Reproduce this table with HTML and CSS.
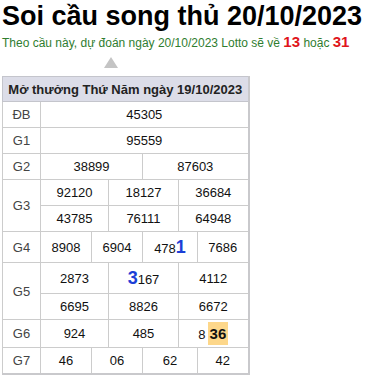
FILE: index.html
```html
<!DOCTYPE html>
<html lang="vi">
<head>
<meta charset="utf-8">
<link rel="stylesheet" href="styles.css">
</head>
<body>
<div class="page">
  <h1 class="title">Soi cầu song thủ 20/10/2023</h1>
  <p class="sub">Theo cầu này, dự đoán ngày 20/10/2023 Lotto sẽ về <b class="hot">13</b> hoặc <b class="hot">31</b></p>
  <div class="arrow-row"><span class="arrow"></span></div>
  <table class="kq">
    <colgroup>
      <col class="c0"><col class="c1"><col class="c2"><col class="c3"><col class="c4"><col class="c5"><col class="c6">
    </colgroup>
    <thead>
      <tr><th colspan="7">Mở thưởng Thứ Năm ngày 19/10/2023</th></tr>
    </thead>
    <tbody>
      <tr><td class="lb">ĐB</td><td colspan="6">45305</td></tr>
      <tr><td class="lb">G1</td><td colspan="6">95559</td></tr>
      <tr><td class="lb">G2</td><td colspan="3">38899</td><td colspan="3">87603</td></tr>
      <tr><td class="lb" rowspan="2">G3</td><td colspan="2">92120</td><td colspan="2">18127</td><td colspan="2">36684</td></tr>
      <tr><td colspan="2">43785</td><td colspan="2">76111</td><td colspan="2">64948</td></tr>
      <tr class="tall"><td class="lb">G4</td><td>8908</td><td colspan="2">6904</td><td colspan="2">478<span class="blue">1</span></td><td>7686</td></tr>
      <tr class="tall"><td class="lb" rowspan="2">G5</td><td colspan="2">2873</td><td colspan="2"><span class="blue">3</span>167</td><td colspan="2">4112</td></tr>
      <tr><td colspan="2">6695</td><td colspan="2">8826</td><td colspan="2">6672</td></tr>
      <tr class="g6"><td class="lb">G6</td><td colspan="2">924</td><td colspan="2">485</td><td colspan="2">8<span class="mark">36</span></td></tr>
      <tr><td class="lb">G7</td><td>46</td><td colspan="2">06</td><td colspan="2">62</td><td>42</td></tr>
    </tbody>
  </table>
</div>
</body>
</html>
```

FILE: styles.css
```css
html, body {
  margin: 0;
  padding: 0;
  background: #fff;
}
.page {
  padding: 0 2px;
  font-family: "Liberation Sans", Arial, sans-serif;
  color: #222;
}
.title {
  margin: 0;
  padding-top: 1px;
  font-size: 27px;
  line-height: 30px;
  font-weight: bold;
  color: #000;
  white-space: nowrap;
}
.sub {
  margin: 3px 0 0;
  font-size: 12px;
  line-height: 16px;
  color: #2f7d2f;
  white-space: nowrap;
}
.hot {
  color: #e0151b;
  font-size: 15px;
}
.arrow-row {
  height: 20px;
  padding-left: 102px;
  padding-top: 6px;
  box-sizing: border-box;
}
.arrow {
  display: block;
  width: 0;
  height: 0;
  border-left: 7px solid transparent;
  border-right: 7px solid transparent;
  border-bottom: 11px solid #c4c4c4;
}
.kq {
  margin-top: 5px;
  border-collapse: collapse;
  table-layout: fixed;
  width: 246px;
  border-right: 2px solid #c9c9cc;
  border-bottom: 2px solid #c9c9cc;
  font-size: 13px;
}
.c0 { width: 38px; }
.c1 { width: 51px; }
.c2 { width: 17px; }
.c3 { width: 34px; }
.c4 { width: 36px; }
.c5 { width: 19px; }
.c6 { width: 51px; }
.kq th {
  background: #dcdde8;
  border: 1px solid #c4c5cc;
  font-size: 13px;
  font-weight: bold;
  color: #222;
  height: 24px;
  padding: 0;
  text-align: center;
  white-space: nowrap;
}
.kq td {
  border: 1px solid #cccccc;
  height: 25px;
  padding: 0;
  text-align: center;
  color: #111;
  white-space: nowrap;
}
.kq td.lb {
  color: #444;
  font-size: 13px;
}
.kq tr.tall td {
  height: 30px;
}
.kq tr.g6 td {
  height: 27px;
}
.blue {
  color: #1c3fd6;
  font-weight: bold;
  font-size: 18px;
}
.mark {
  display: inline-block;
  background: #fdd78a;
  font-weight: bold;
  font-size: 15px;
  color: #111;
  padding: 3px 2px;
  margin-left: 2px;
}
```
